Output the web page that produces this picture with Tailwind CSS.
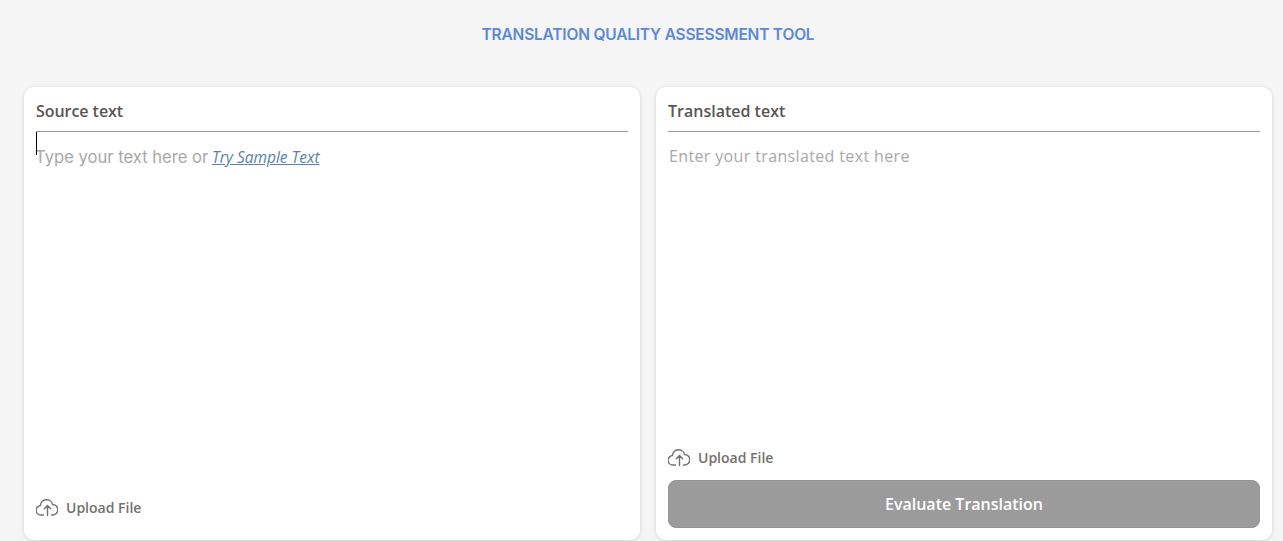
<!DOCTYPE html>
<html lang="en">
<head>
    <meta charset="UTF-8">
    <title>Translation Quality Assessment Tool</title>
    <script src="https://cdn.jsdelivr.net/npm/@tailwindcss/browser@4"></script>
</head>
<body class="bg-[#f5f5f5] h-[541px] overflow-hidden font-['Open_Sans',sans-serif]">
    <div class="pl-6 pr-[11px]">
        <!-- Title -->
        <h1 class="h-[87px] pt-[25px] text-center text-[15.5px] tracking-[-0.2px] leading-[20px] font-semibold text-[#5b87dc] font-['Inter',sans-serif]">TRANSLATION QUALITY ASSESSMENT TOOL</h1>

        <div class="grid grid-cols-2 gap-4 h-[453px]">
            <!-- Source -->
            <div class="bg-white rounded-[10px] shadow-[0_1px_4px_rgba(0,0,0,0.14)] px-3 flex flex-col">
                <h2 class="h-[45px] pt-[13px] text-[16px] tracking-[-0.05px] leading-[22px] font-semibold text-[#595654] border-b border-[#999]">Source text</h2>
                <div class="relative flex-1 pt-[14px]">
                    <span class="absolute left-0 top-0 w-px h-[23px] bg-black"></span>
                    <p class="-ml-px text-[16.6px] leading-[22px] text-[#a8a8a8] font-['Inter',sans-serif]">Type your text here or <a href="#" class="-ml-px italic underline text-[#5a82ad] text-[15.5px] font-['Open_Sans',sans-serif]">Try Sample Text</a></p>
                </div>
                <div class="flex items-center gap-[8px] h-[22px] mb-[22px] text-[14px] font-semibold text-[#73716f]">
                    <svg class="w-[22px] h-[20px]" viewBox="0 0 22 20" fill="none" stroke="#73716f" stroke-width="1.4" stroke-linecap="round" stroke-linejoin="round"><path d="M7.500 18H5.500A4.300 4.300 0 0 1 4.400 8.500 6.200 6.200 0 0 1 16.600 7.500 5 5 0 0 1 16.500 18H15.500"/><path d="M11.500 18.500V8.500M8.300 11.700 11.500 8.500 14.700 11.700"/></svg>
                    <span>Upload File</span>
                </div>
            </div>

            <!-- Translated -->
            <div class="bg-white rounded-[10px] shadow-[0_1px_4px_rgba(0,0,0,0.14)] px-3 flex flex-col">
                <h2 class="h-[45px] pt-[13px] text-[16px] leading-[22px] font-semibold text-[#595654] border-b border-[#999]">Translated text</h2>
                <div class="flex-1 pt-[13px] pl-px">
                    <p class="text-[16px] leading-[22px] text-[#a8a8a8] tracking-[0.36px]">Enter your translated text here</p>
                </div>
                <div class="flex items-center gap-[8px] h-[22px] mb-[12px] text-[14px] font-semibold text-[#73716f]">
                    <svg class="w-[22px] h-[20px]" viewBox="0 0 22 20" fill="none" stroke="#73716f" stroke-width="1.4" stroke-linecap="round" stroke-linejoin="round"><path d="M7.500 18H5.500A4.300 4.300 0 0 1 4.400 8.500 6.200 6.200 0 0 1 16.600 7.500 5 5 0 0 1 16.500 18H15.500"/><path d="M11.500 18.500V8.500M8.300 11.700 11.500 8.500 14.700 11.700"/></svg>
                    <span>Upload File</span>
                </div>
                <button class="h-12 mb-3 rounded-[8px] bg-[#9b9b9b] border border-[#949494] text-white text-[16px] font-semibold">Evaluate Translation</button>
            </div>
        </div>
    </div>
</body>
</html>
